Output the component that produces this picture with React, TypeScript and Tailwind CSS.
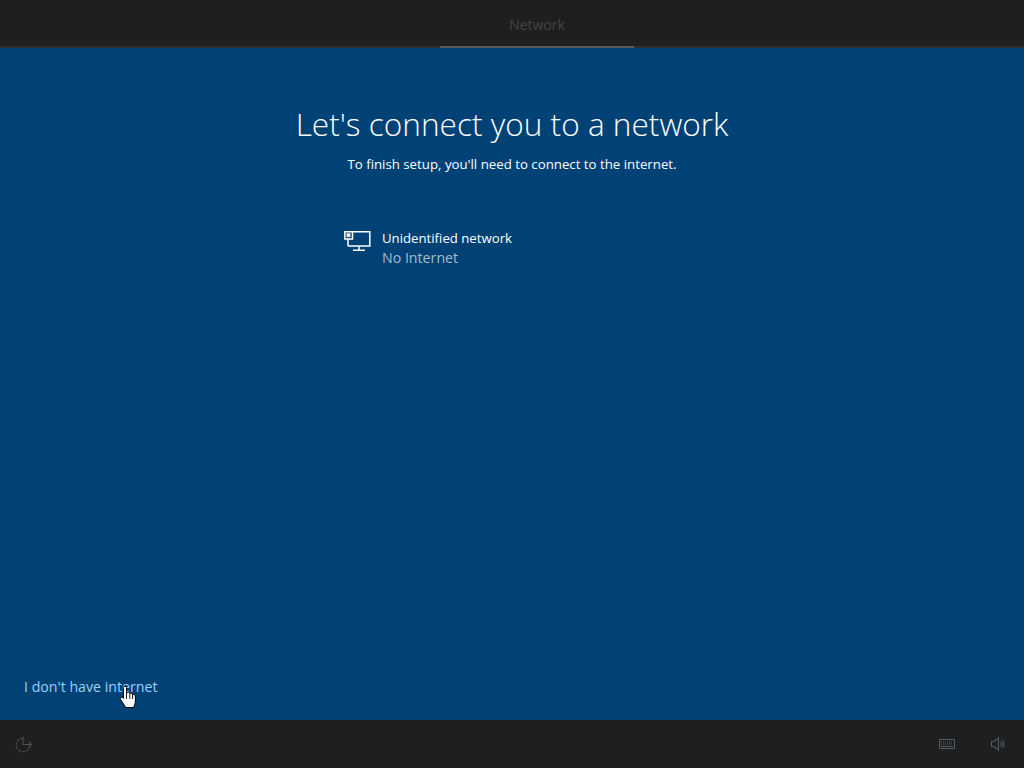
import React from 'react';

const uiFont = '[font-family:"Open_Sans","Noto_Sans",sans-serif]';

function NetworkIcon() {
  return (
    <svg width="27" height="22" viewBox="0 0 27 22" fill="none" stroke="#fff" strokeWidth="1.5">
      <path d="M8 1.7H25.8V16H4" />
      <path d="M0.8 1.7H8.5V9H0.8Z" />
      <path d="M2.8 3.6H6.2V6.8H2.8Z" fill="#fff" strokeWidth="0.5" />
      <path d="M4 9V16" />
      <path d="M15 16V20.3M9 20.3H21" />
    </svg>
  );
}

function HandCursor() {
  return (
    <svg className="absolute left-[119px] top-[685px]" width="19" height="24" viewBox="0 0 19 24">
      <path
        d="M4.5 2.5C4.5 0.8 7.5 0.8 7.5 2.5V9L8 7.5C9 6.8 10.5 7 10.8 8.5C11.8 7.8 13.2 8.2 13.6 9.6C14.6 9.1 16.2 9.6 16.4 11V16C16.4 19 15.2 20.4 14.6 22.5H6.6C5.6 20 3.6 18 1.6 14.6C0.7 13 2.4 11.4 3.8 12.6L4.5 13.4Z"
        fill="#fff"
        stroke="#000"
        strokeWidth="1"
        strokeLinejoin="round"
      />
      <path d="M7.5 9V14M10.8 8.5V14M13.6 9.6V14" stroke="#000" strokeWidth="0.9" />
    </svg>
  );
}

function EaseOfAccessIcon() {
  return (
    <svg width="18" height="18" viewBox="0 0 18 18" fill="none" stroke="#4f4f4f" strokeWidth="1.1">
      <path d="M8 3.2A6.8 6.8 0 1 0 14.8 10" strokeDasharray="3 1" />
      <path d="M8 1.5V9.5H16.5M14 7L16.5 9.5L14 12" />
    </svg>
  );
}

function KeyboardIcon() {
  return (
    <svg width="16" height="10" viewBox="0 0 16 10" fill="none" stroke="#4f5e66" strokeWidth="1">
      <path d="M0.5 0.5H15.5V9.5H0.5Z" />
      <path d="M2 3H14M2 5H14" strokeDasharray="1 1" />
      <path d="M2 7.5H14" />
    </svg>
  );
}

function VolumeIcon() {
  return (
    <svg width="14" height="14" viewBox="0 0 14 14" fill="none" stroke="#4f5e66" strokeWidth="1.1">
      <path d="M0.5 4.5H3L7.5 1V13L3 9.5H0.5Z" />
      <path d="M9.5 4.5C10.5 6 10.5 8 9.5 9.5M11.5 3C13 5.5 13 8.5 11.5 11" />
    </svg>
  );
}

export default function App() {
  return (
    <div className={`relative flex h-[768px] w-[1024px] flex-col overflow-hidden bg-[#004275] text-white ${uiFont}`}>
      <header className="flex h-[48px] shrink-0 justify-center border-b-2 border-[#2f2f2f] bg-[#1f1f1f] pl-[50px]">
        <div className="-mb-[2px] flex h-[48px] w-[194px] items-center justify-center border-b-2 border-[#5a5a5a] pt-[2px] text-[14px] text-[#444444]">
          Network
        </div>
      </header>

      <main className="flex flex-1 flex-col">
        <div className="flex flex-col items-center">
          <h1 className="mt-[50px] text-[31.6px] leading-[52px] font-light">Let's connect you to a network</h1>
          <p className="mt-[4px] text-[13.25px] leading-[20px]">To finish setup, you'll need to connect to the internet.</p>
        </div>

        <div className="mt-[54px] ml-[344px] flex items-start gap-[11px]">
          <div className="mt-[2px]">
            <NetworkIcon />
          </div>
          <div>
            <div className="text-[13.2px] leading-[20px]">Unidentified network</div>
            <div className="text-[14.2px] leading-[20px] text-[#a3bbcf]">No Internet</div>
          </div>
        </div>

        <div className="mt-auto mb-[23px] ml-[24px] text-[14.2px] leading-[20px] text-[#9ed0f5]">I don't have internet</div>
      </main>

      <footer className="flex h-[48px] shrink-0 items-center justify-between bg-[#1f1f1f] pr-[19px] pl-[15px]">
        <EaseOfAccessIcon />
        <div className="flex items-center gap-[36px]">
          <KeyboardIcon />
          <VolumeIcon />
        </div>
      </footer>

      <HandCursor />
    </div>
  );
}
